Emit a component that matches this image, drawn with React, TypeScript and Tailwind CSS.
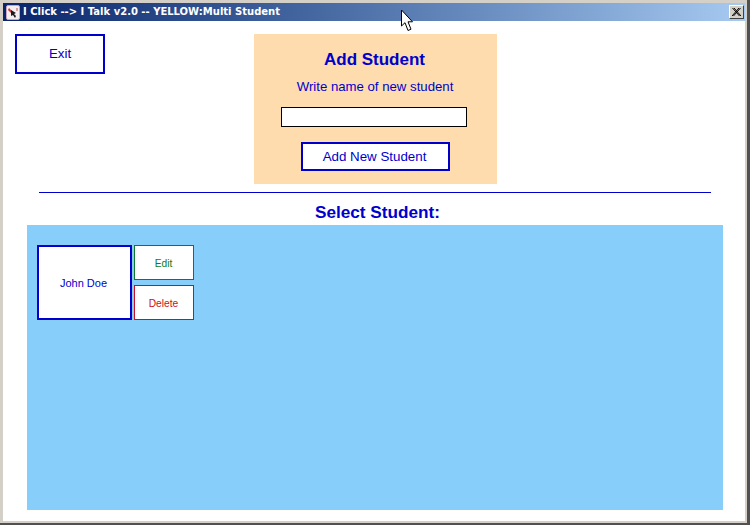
// App.tsx
const Cursor = () => (
  <svg className="absolute left-[400px] top-[9px]" width="14" height="23" viewBox="0 0 14 23">
    <path d="M1.5 1 V17 L5 13.7 L8 21.5 L11 20.2 L8 12.8 H12.5 Z" fill="#fff" stroke="#000" strokeWidth="1" />
  </svg>
);

const AppIcon = () => (
  <svg width="14" height="15" viewBox="0 0 14 15" className="shrink-0">
    <rect x="0.5" y="0.5" width="13" height="14" rx="1.5" fill="#f4eef0" stroke="#c9a6c0" />
    <path d="M3 3 L6 6 L5 8 L2 5 Z" fill="#c8383a" />
    <path d="M5 5 L5 11 L7 10 L9 13 L10 11 L8 9 L10 8 Z" fill="#1a1a1a" />
    <path d="M10 3 L12 3 L12 6 L10 6 Z" fill="#d9a0a0" />
  </svg>
);

export default function App() {
  return (
    <div className="relative h-[525px] w-[750px] overflow-hidden border-r-[3px] border-b-[2px] border-r-[#505050] border-b-[#505050] font-['Liberation_Sans',Arial,sans-serif]">
      <div className="flex h-full flex-col border-[3px] border-r-[2px] border-b-[2px] border-[#d4d0c8] bg-white">
        {/* Title bar */}
        <div className="flex h-[18px] shrink-0 items-center justify-between bg-gradient-to-r from-[#0a246a] to-[#a6caf0] pl-[3px] pr-px">
          <div className="flex items-center gap-[3px]">
            <AppIcon />
            <span className="font-['DejaVu_Sans',Verdana,sans-serif] text-[10px] leading-none font-bold whitespace-nowrap text-white">
              {'I Click --> I Talk v2.0 -- YELLOW:Multi Student'}
            </span>
          </div>
          <div className="flex h-[14px] w-[15px] items-center justify-center border border-t-white border-l-white border-r-[#404040] border-b-[#404040] bg-[#d4d0c8]">
            <svg width="9" height="8" viewBox="0 0 9 8">
              <path d="M0.5 0 L7.5 8 M2 0 L9 8 M7 0 L0 8 M8.5 0 L1.5 8" stroke="#000" strokeWidth="1" />
            </svg>
          </div>
        </div>

        {/* Top area */}
        <div className="relative mt-[13px] flex h-[150px] shrink-0 justify-center pl-[3px]">
          <div className="absolute left-[12px] top-0">
            <button className="h-[40px] w-[90px] border-2 border-[#0000cd] bg-white text-[13.33px] text-[#0000cd]">
              Exit
            </button>
          </div>
          <div className="flex h-[150px] w-[243px] flex-col items-center bg-[#fedcae]">
            <div className="mr-[2px] mt-[15px] text-[17px] leading-[22px] font-bold text-[#0000cd]">Add Student</div>
            <div className="mr-px mt-[7px] text-[13.2px] leading-[18px] text-[#0000cd]">Write name of new student</div>
            <input type="text" className="mr-[4px] mt-[11px] h-[20px] w-[186px] border border-black bg-white" />
            <button className="mt-[15px] h-[29px] w-[149px] border-2 border-[#0000cd] bg-white pr-[2px] text-[13.33px] text-[#0000cd]">
              Add New Student
            </button>
          </div>
        </div>

        {/* Divider */}
        <div className="ml-[36px] mr-[34px] mt-[8px] h-px shrink-0 bg-[#0000cd]" />

        <div className="mt-[8px] shrink-0 pl-[7px] text-center text-[17.2px] leading-[22px] font-bold text-[#0000cd]">
          Select Student:
        </div>

        {/* Student list */}
        <div className="ml-[24px] mr-[22px] mt-[2px] flex h-[285px] shrink-0 gap-[2px] bg-[#87cefa] pl-[10px] pt-[20px]">
          <button className="h-[75px] w-[95px] border-2 border-[#0000cd] bg-white pr-[2px] pt-px text-[11px] text-[#0000cd]">
            John Doe
          </button>
          <div className="flex flex-col gap-[5px]">
            <button className="h-[35px] w-[60px] border border-[#107a28] bg-white pr-px pt-[2px] text-[10.2px] text-[#107a28]">
              Edit
            </button>
            <button className="h-[35px] w-[60px] border border-[#c81020] bg-white pr-px pt-[2px] text-[10.2px] text-[#c81020]">
              Delete
            </button>
          </div>
        </div>
      </div>

      <Cursor />
    </div>
  );
}
